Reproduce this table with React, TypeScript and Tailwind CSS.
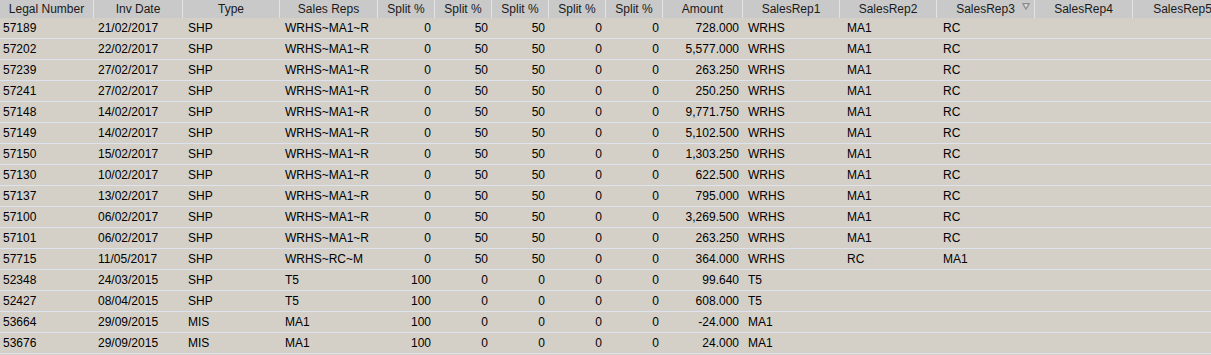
import React from 'react';

type Col = { title: string; w: string; align: 'left' | 'right'; pad: string; filter?: boolean };

const columns: Col[] = [
  { title: 'Legal Number', w: 'w-[94px]', align: 'left', pad: 'pl-[3px]' },
  { title: 'Inv Date', w: 'w-[89px]', align: 'left', pad: 'pl-[4px]' },
  { title: 'Type', w: 'w-[97px]', align: 'left', pad: 'pl-[5px]' },
  { title: 'Sales Reps', w: 'w-[98px]', align: 'left', pad: 'pl-[5px]' },
  { title: 'Split %', w: 'w-[57px]', align: 'right', pad: 'pr-[4px]' },
  { title: 'Split %', w: 'w-[57px]', align: 'right', pad: 'pr-[4px]' },
  { title: 'Split %', w: 'w-[57px]', align: 'right', pad: 'pr-[4px]' },
  { title: 'Split %', w: 'w-[57px]', align: 'right', pad: 'pr-[4px]' },
  { title: 'Split %', w: 'w-[57px]', align: 'right', pad: 'pr-[4px]' },
  { title: 'Amount', w: 'w-[80px]', align: 'right', pad: 'pr-[4px]' },
  { title: 'SalesRep1', w: 'w-[97px]', align: 'left', pad: 'pl-[5px]' },
  { title: 'SalesRep2', w: 'w-[97px]', align: 'left', pad: 'pl-[7px]' },
  { title: 'SalesRep3', w: 'w-[98px]', align: 'left', pad: 'pl-[6px]', filter: true },
  { title: 'SalesRep4', w: 'w-[98px]', align: 'left', pad: 'pl-[6px]' },
  { title: 'SalesRep5', w: 'w-[100px]', align: 'left', pad: 'pl-[6px]' },
];

const std = (no: string, date: string, amt: string) => [no, date, 'SHP', 'WRHS~MA1~R', '0', '50', '50', '0', '0', amt, 'WRHS', 'MA1', 'RC', '', ''];
const single = (no: string, date: string, type: string, rep: string, amt: string) => [no, date, type, rep, '100', '0', '0', '0', '0', amt, rep, '', '', '', ''];

const rows: string[][] = [
  std('57189', '21/02/2017', '728.000'),
  std('57202', '22/02/2017', '5,577.000'),
  std('57239', '27/02/2017', '263.250'),
  std('57241', '27/02/2017', '250.250'),
  std('57148', '14/02/2017', '9,771.750'),
  std('57149', '14/02/2017', '5,102.500'),
  std('57150', '15/02/2017', '1,303.250'),
  std('57130', '10/02/2017', '622.500'),
  std('57137', '13/02/2017', '795.000'),
  std('57100', '06/02/2017', '3,269.500'),
  std('57101', '06/02/2017', '263.250'),
  ['57715', '11/05/2017', 'SHP', 'WRHS~RC~M', '0', '50', '50', '0', '0', '364.000', 'WRHS', 'RC', 'MA1', '', ''],
  single('52348', '24/03/2015', 'SHP', 'T5', '99.640'),
  single('52427', '08/04/2015', 'SHP', 'T5', '608.000'),
  single('53664', '29/09/2015', 'MIS', 'MA1', '-24.000'),
  single('53676', '29/09/2015', 'MIS', 'MA1', '24.000'),
];

function FilterIcon() {
  return (
    <svg width="8" height="7" viewBox="0 0 8 7" className="absolute right-[4px] top-[3px]">
      <path d="M0.5 0.5 H7.5 L4 6.5 Z" fill="#a8a8a8" stroke="#8c8c8c" strokeWidth="1" />
      <path d="M2.5 1.5 H5.5 L4 4 Z" fill="#f4f4f4" />
    </svg>
  );
}

export default function App() {
  return (
    <div
      className="w-[1211px] h-[355px] overflow-hidden bg-[#d4d0c8] text-[12px] leading-none text-black"
      style={{ fontFamily: '"Liberation Sans", Arial, sans-serif' }}
    >
      <div className="flex h-[18px] bg-[#c9c9c9] whitespace-nowrap">
        {columns.map((c, i) => (
          <div
            key={i}
            className={`${c.w} shrink-0 relative flex items-center justify-center border-r border-[#e3e3e3] text-[#1a1a1a]`}
          >
            {c.title}
            {c.filter && <FilterIcon />}
          </div>
        ))}
      </div>
      {rows.map((r, ri) => (
        <div key={ri} className="flex h-[21px] border-b border-[#dde4f0] whitespace-nowrap">
          {columns.map((c, ci) => (
            <div
              key={ci}
              className={`${c.w} shrink-0 flex items-center overflow-hidden ${c.pad} ${c.align === 'right' ? 'justify-end' : 'justify-start'}`}
            >
              {r[ci]}
            </div>
          ))}
        </div>
      ))}
    </div>
  );
}
